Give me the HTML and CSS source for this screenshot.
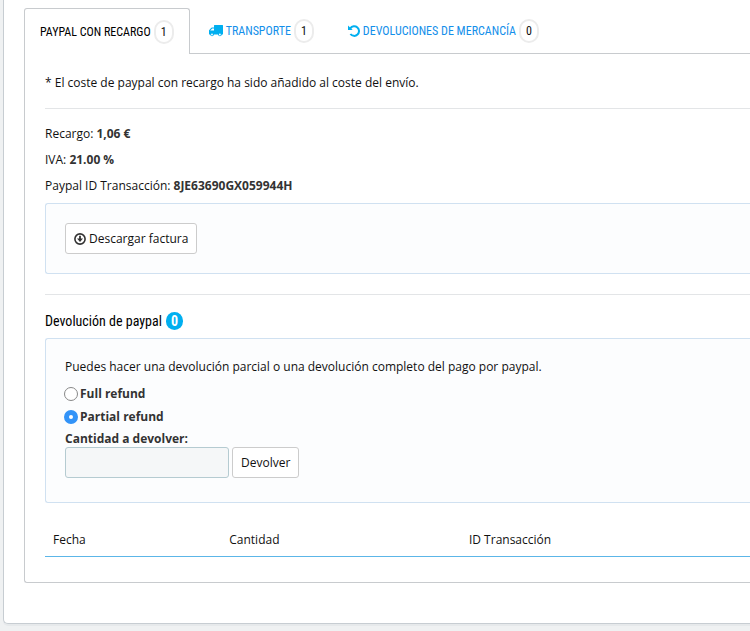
FILE: index.html
```html
<!DOCTYPE html>
<html lang="es">
<head>
<meta charset="utf-8">
<meta name="viewport" content="width=device-width, initial-scale=1">
<title>Paypal con recargo</title>
<link rel="stylesheet" href="styles.css">
</head>
<body>
<main class="panel">
  <nav class="tabs">
    <a class="tab active" href="#paypal">PAYPAL CON RECARGO <span class="badge">1</span></a>
    <a class="tab" href="#transporte"><svg class="icon truck" viewBox="0 0 14 12" aria-hidden="true"><path fill-rule="evenodd" d="M5.500 0H13.500Q14 0 14 .5V9Q14 9.600 13.400 9.600H12.900A2 2 0 0 1 9 9.600H5A2 2 0 0 1 1.100 9.600H.5Q0 9.600 0 9V5.600Q0 5.200 .3 4.900L2.300 2.800Q2.700 2.400 3.200 2.400H5V.5Q5 0 5.500 0ZM1.200 5.600H5V3.500H3.200ZM3 8.600A.9 .9 0 1 0 3 10.400A.9 .9 0 0 0 3 8.600ZM10.900 8.600A.9 .9 0 1 0 10.900 10.400A.9 .9 0 0 0 10.900 8.600Z"/></svg>TRANSPORTE <span class="badge">1</span></a>
    <a class="tab" href="#devoluciones"><svg class="icon" viewBox="0 0 12 12" aria-hidden="true"><path d="M2.300 3.300A4.800 4.800 0 1 1 2.400 9" fill="none" stroke="currentColor" stroke-width="2"/><path d="M0 .5V5H4.700Z"/></svg>DEVOLUCIONES DE MERCANCÍA <span class="badge">0</span></a>
  </nav>
  <section class="content" id="paypal">
    <p class="note">* El coste de paypal con recargo ha sido añadido al coste del envío.</p>
    <hr>
    <div class="details">
      <p>Recargo: <strong>1,06 €</strong></p>
      <p>IVA: <strong>21.00 %</strong></p>
      <p>Paypal ID Transacción: <strong>8JE63690GX059944H</strong></p>
    </div>
    <div class="well">
      <button class="btn" type="button"><svg class="icon" viewBox="0 0 12 12" aria-hidden="true"><circle cx="6" cy="6" r="5.100" fill="none" stroke="currentColor" stroke-width="1.600"/><path d="M5.100 2.700H6.900V5.600H9L6 9L3 5.600H5.100Z"/></svg>Descargar factura</button>
    </div>
    <hr>
    <h2>Devolución de paypal <span class="count">0</span></h2>
    <form class="well refund">
      <p>Puedes hacer una devolución parcial o una devolución completo del pago por paypal.</p>
      <label class="choice"><input type="radio" name="refund" value="full">Full refund</label>
      <label class="choice"><input type="radio" name="refund" value="partial" checked>Partial refund</label>
      <label class="amount-label" for="amount">Cantidad a devolver:</label>
      <div class="row">
        <input class="amount" id="amount" type="text">
        <button class="btn" type="button">Devolver</button>
      </div>
    </form>
    <table>
      <thead><tr><th class="date">Fecha</th><th class="sum">Cantidad</th><th>ID Transacción</th></tr></thead>
    </table>
  </section>
</main>
</body>
</html>
```

FILE: styles.css
```css
* { box-sizing: border-box; }
body {
  margin: 0;
  padding: 0 0 7px 3px;
  background: #eff1f2;
  color: #111;
  font: 12px/18px "Open Sans", "Noto Sans", sans-serif;
}
p, h2 { margin: 0; }
strong { color: #333; }
.panel {
  padding: 8px 0 40px 20px;
  background: #fff;
  border: solid #c7cdd2;
  border-width: 0 0 1px 1px;
  border-radius: 0 0 0 5px;
  box-shadow: 0 2px 0 #e6e9eb;
}
.tabs {
  display: flex;
  height: 46px;
  font: 12px/20px "Ubuntu Condensed", "Roboto Condensed", "Liberation Sans Narrow", sans-serif;
  white-space: nowrap;
  box-shadow: inset 0 -1px #c8cbce;
}
.tab {
  display: flex;
  align-items: center;
  gap: 3px;
  padding: 0 15px 0 19px;
  color: #148fea;
  text-decoration: none;
}
.tab.active {
  padding: 0 15px;
  color: #000;
  background: #fff;
  border: 1px solid #c8cbce;
  border-bottom: 0;
  border-radius: 3px 3px 0 0;
}
.badge {
  min-width: 20px;
  height: 24px;
  border: 2px solid #ececec;
  border-radius: 12px;
  color: #111;
  text-align: center;
}
.icon { width: 12px; height: 12px; fill: currentColor; flex: none; }
.tab .icon { color: #00aff0; }
.tab .truck { width: 14px; }
.content {
  padding: 20px 0 25px 20px;
  border: solid #c8cbce;
  border-width: 0 0 1px 1px;
  border-radius: 0 0 0 3px;
}
hr { margin: 16px 0; border: 0; border-top: 1px solid #e3e5e7; }
.details { display: grid; gap: 8px; margin-bottom: 8px; }
.well {
  padding: 19px;
  background: #fcfdfe;
  border: solid #d0e1f1;
  border-width: 1px 0 1px 1px;
  border-radius: 3px 0 0 3px;
}
.well + hr { margin: 20px 0 16px; }
.btn {
  display: inline-flex;
  align-items: center;
  gap: 3px;
  height: 31px;
  padding: 0 8px;
  background: #fff;
  border: 1px solid #ccc;
  border-radius: 3px;
  color: #111;
  font: inherit;
}
.btn .icon { color: #333; }
.well > .btn { display: flex; }
h2 {
  display: flex;
  align-items: center;
  gap: 4px;
  margin-bottom: 7px;
  color: #000;
  font: 14px/20px "Ubuntu Condensed", "Roboto Condensed", "Liberation Sans Narrow", sans-serif;
}
.count {
  width: 17px;
  border-radius: 9px;
  background: #00aff0;
  color: #fff;
  font-weight: bold;
  line-height: 18px;
  text-align: center;
}
.refund { padding-bottom: 24px; }
.refund p { margin-bottom: 9px; }
.choice, .amount-label { display: flex; align-items: center; color: #333; font-weight: bold; }
.choice { gap: 2px; margin-bottom: 5px; }
.amount-label { line-height: 16px; }
.choice input {
  appearance: none;
  width: 14px;
  height: 14px;
  margin: 0 0 0 -1px;
  border: 1px solid #888;
  border-radius: 50%;
  background: #fff;
}
.choice input:checked { border: 5px solid #3293f8; }
.row { display: flex; align-items: center; gap: 3px; }
.amount {
  width: 164px;
  height: 31px;
  padding: 6px 8px;
  background: #f5f7f8;
  border: 1px solid #b5cbd1;
  border-radius: 3px;
  font: inherit;
}
table { width: 100%; margin-top: 21px; border-spacing: 0; table-layout: fixed; }
th { padding: 7px 8px; border-bottom: 1px solid #5cb6e8; font-weight: normal; text-align: left; }
.date { width: 25%; }
.sum { width: 34%; }
```
